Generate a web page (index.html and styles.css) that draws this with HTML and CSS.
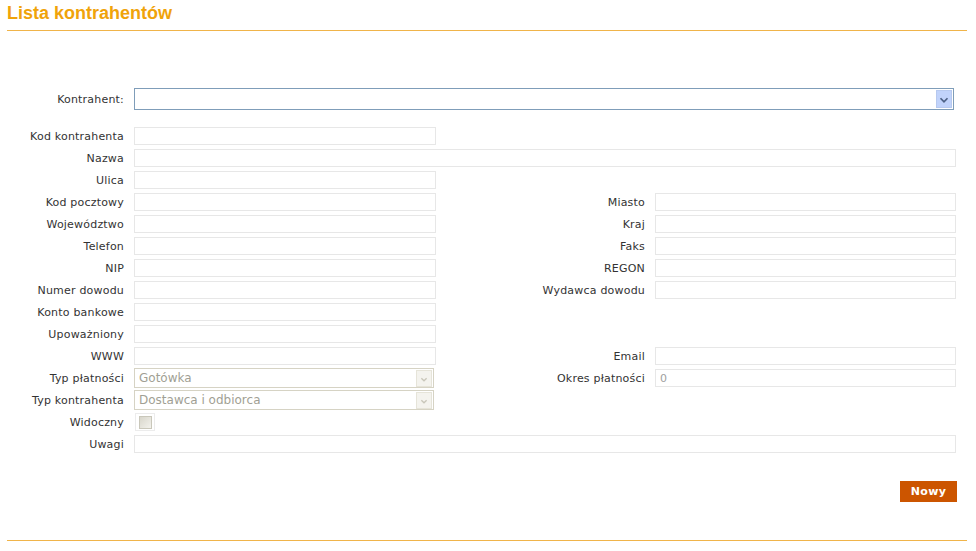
FILE: index.html
```html
<!DOCTYPE html>
<html lang="pl">
<head>
    <meta charset="UTF-8">
    <title>Lista kontrahentów</title>
    <link rel="stylesheet" href="styles.css">
</head>
<body>
    <div class="page">
        <h1>Lista kontrahentów</h1>

        <div class="picker">
            <label class="lbl">Kontrahent:</label>
            <div class="combo main">
                <span class="combo-text"></span>
                <span class="arrow">
                    <svg width="16" height="18" viewBox="0 0 16 18"><path d="M4 7 L8 11 L12 7" fill="none" stroke="#4d6185" stroke-width="2"/></svg>
                </span>
            </div>
        </div>

        <form class="fields">
            <div class="row">
                <label class="lbl">Kod kontrahenta</label>
                <input type="text">
            </div>
            <div class="row">
                <label class="lbl">Nazwa</label>
                <input type="text" class="wide">
            </div>
            <div class="row">
                <label class="lbl">Ulica</label>
                <input type="text">
            </div>
            <div class="row">
                <label class="lbl">Kod pocztowy</label>
                <input type="text">
                <label class="lbl">Miasto</label>
                <input type="text">
            </div>
            <div class="row">
                <label class="lbl">Województwo</label>
                <input type="text">
                <label class="lbl">Kraj</label>
                <input type="text">
            </div>
            <div class="row">
                <label class="lbl">Telefon</label>
                <input type="text">
                <label class="lbl">Faks</label>
                <input type="text">
            </div>
            <div class="row">
                <label class="lbl">NIP</label>
                <input type="text">
                <label class="lbl">REGON</label>
                <input type="text">
            </div>
            <div class="row">
                <label class="lbl">Numer dowodu</label>
                <input type="text">
                <label class="lbl">Wydawca dowodu</label>
                <input type="text">
            </div>
            <div class="row">
                <label class="lbl">Konto bankowe</label>
                <input type="text">
            </div>
            <div class="row">
                <label class="lbl">Upoważniony</label>
                <input type="text">
            </div>
            <div class="row">
                <label class="lbl">WWW</label>
                <input type="text">
                <label class="lbl">Email</label>
                <input type="text">
            </div>
            <div class="row">
                <label class="lbl">Typ płatności</label>
                <div class="combo off">
                    <span class="combo-text">Gotówka</span>
                    <span class="arrow">
                        <svg width="16" height="17" viewBox="0 0 16 17"><path d="M5 7 L8 10 L11 7" fill="none" stroke="#c9c7ba" stroke-width="1.5"/></svg>
                    </span>
                </div>
                <label class="lbl">Okres płatności</label>
                <input type="text" class="muted" value="0">
            </div>
            <div class="row">
                <label class="lbl">Typ kontrahenta</label>
                <div class="combo off">
                    <span class="combo-text">Dostawca i odbiorca</span>
                    <span class="arrow">
                        <svg width="16" height="17" viewBox="0 0 16 17"><path d="M5 7 L8 10 L11 7" fill="none" stroke="#c9c7ba" stroke-width="1.5"/></svg>
                    </span>
                </div>
            </div>
            <div class="row">
                <label class="lbl">Widoczny</label>
                <span class="check"><span class="check-box"></span></span>
            </div>
            <div class="row">
                <label class="lbl">Uwagi</label>
                <input type="text" class="wide">
            </div>
        </form>

        <div class="actions">
            <button type="button" class="btn">Nowy</button>
        </div>

        <div class="footer-line"></div>
    </div>
</body>
</html>
```

FILE: styles.css
```css
body {
    margin: 0;
    font-family: Verdana, "DejaVu Sans", sans-serif;
    font-size: 11px;
    color: #333;
    background-color: #fff;
}
.page {
    padding: 0 9px 0 7px;
}
h1 {
    margin: 0;
    padding: 3px 0 6px 0;
    font-family: "Liberation Sans", Arial, sans-serif;
    font-size: 18px;
    font-weight: bold;
    color: #f0a30a;
    border-bottom: 1px solid #f0b44a;
    line-height: 21px;
}
.lbl {
    text-align: right;
    padding-right: 10px;
    white-space: nowrap;
    letter-spacing: 0.2px;
}
.picker {
    display: grid;
    grid-template-columns: 127px 820px;
    align-items: center;
    margin-top: 57px;
    height: 22px;
}
.combo {
    display: flex;
    align-items: center;
    box-sizing: border-box;
    background-color: #fff;
}
.combo-text {
    flex: 1;
    padding-left: 4px;
}
.combo.main {
    height: 22px;
    border: 1px solid #7f9db9;
}
.combo.main .arrow {
    width: 16px;
    height: 18px;
    margin-right: 1px;
    background-color: #c1d3fb;
    border: 1px solid #b7c9ef;
    box-sizing: border-box;
    display: flex;
}
.combo.off {
    height: 20px;
    width: 300px;
    border: 1px solid #d6d3c4;
    color: #a19f94;
    font-size: 12px;
}
.combo.off .arrow {
    width: 16px;
    height: 17px;
    margin-right: 1px;
    background-color: #f4f3ee;
    border: 1px solid #e6e4d9;
    box-sizing: border-box;
    display: flex;
}
.fields {
    margin-top: 15px;
}
.row {
    display: grid;
    grid-template-columns: 127px 302px 219px 301px;
    align-items: center;
    height: 22px;
}
input[type="text"] {
    box-sizing: border-box;
    height: 18px;
    margin: 0;
    padding: 0 4px;
    border: 1px solid #e7e7e7;
    font-family: Verdana, "DejaVu Sans", sans-serif;
    font-size: 11px;
    background-color: #fff;
}
input.wide {
    grid-column: 2 / 5;
}
input.muted {
    color: #a0a0a0;
}
.check {
    display: flex;
    align-items: center;
    justify-content: center;
    width: 20px;
    height: 18px;
    margin-left: 1px;
    box-sizing: border-box;
    border: 1px solid #ececec;
}
.check-box {
    width: 13px;
    height: 13px;
    border: 1px solid #c9c7ba;
    box-sizing: border-box;
    background: linear-gradient(135deg, #d8d6cb, #f3f2ec);
}
.actions {
    display: flex;
    justify-content: flex-end;
    margin-top: 26px;
    margin-right: 10px;
}
.btn {
    background-color: #cc5500;
    color: #fff;
    border: none;
    padding: 0;
    width: 57px;
    height: 21px;
    font-family: Verdana, "DejaVu Sans", sans-serif;
    font-size: 11px;
    font-weight: bold;
    letter-spacing: 0.3px;
    cursor: pointer;
}
.footer-line {
    margin-top: 38px;
    border-top: 1px solid #f0b44a;
}
```
